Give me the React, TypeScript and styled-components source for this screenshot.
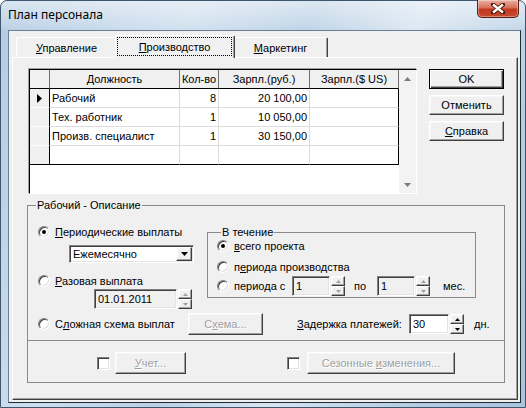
import React from "react"
import styled, { createGlobalStyle, css } from "styled-components"

const GlobalStyle = createGlobalStyle`
  html, body {
    margin: 0;
    padding: 0;
    background: #fff;
  }
  body {
    font-family: "Liberation Sans", Arial, sans-serif;
    font-size: 11px;
    color: #000;
  }
  * {
    box-sizing: border-box;
  }
`

// classic 3d edges
const raised = css`
  border: 1px solid;
  border-color: #fff #404040 #404040 #fff;
  box-shadow: inset -1px -1px #a0a0a0, inset 1px 1px #f7f7f7;
`

const sunken = css`
  border: 1px solid;
  border-color: #808080 #fff #fff #808080;
  box-shadow: inset 1px 1px #404040, inset -1px -1px #e3e3e3;
`

const Window = styled.div`
  width: 526px;
  height: 408px;
  display: flex;
  flex-direction: column;
  border: 1px solid #40566d;
  border-radius: 7px 7px 0 0;
  padding: 0 4px 4px 7px;
  background: linear-gradient(
      180deg,
      rgba(255, 255, 255, 0.5) 0,
      rgba(255, 255, 255, 0.15) 26px,
      rgba(255, 255, 255, 0) 30px
    ),
    linear-gradient(
      112deg,
      #b3cbe2 0%,
      #cddeee 28%,
      #bad0e5 46%,
      #d8e5f1 62%,
      #b6cee4 82%,
      #a9c4de 100%
    );
`

const TitleBar = styled.div`
  height: 29px;
  flex: none;
  display: flex;
  justify-content: space-between;
  align-items: flex-start;
`

const Title = styled.span`
  font-family: "Noto Sans", "Liberation Sans", sans-serif;
  font-size: 12px;
  line-height: 28px;
  color: #000;
`

const CloseButton = styled.div`
  width: 42px;
  height: 18px;
  margin: -1px 2px 0 0;
  border: 1px solid #5c1d12;
  border-top: none;
  border-radius: 0 0 5px 5px;
  background: linear-gradient(180deg, #eab0a1 0%, #d8705a 45%, #c2381f 55%, #c64a30 100%);
  box-shadow: inset 0 0 0 1px rgba(255, 255, 255, 0.35);
  display: flex;
  align-items: center;
  justify-content: center;
`

const Client = styled.div`
  flex: 1;
  display: flex;
  flex-direction: column;
  background: #f0f0f0;
  border: 1px solid;
  border-color: #6b7f95 #1e2a36 #1e2a36 #6b7f95;
  padding: 4px 2px 2px 3px;
`

const TabStrip = styled.div`
  height: 22px;
  flex: none;
  display: flex;
  align-items: flex-end;
  padding-left: 4px;
`

const Tab = styled.div<{ $w: number; $active?: boolean }>`
  position: relative;
  width: ${(p) => p.$w}px;
  height: 20px;
  display: flex;
  align-items: center;
  justify-content: center;
  background: #f0f0f0;
  border-top: 1px solid #fff;
  border-left: 1px solid #fff;
  border-right: 1px solid #404040;
  border-radius: 2px 2px 0 0;
  box-shadow: inset -1px 0 #a0a0a0;
  ${(p) =>
    p.$active &&
    css`
      z-index: 1;
      width: ${p.$w + 4}px;
      height: 23px;
      margin: 0 -2px -1px;
      align-items: stretch;
      padding: 1px 2px 2px 1px;
    `}
`

const FocusLabel = styled.span`
  flex: 1;
  display: flex;
  align-items: center;
  justify-content: center;
  border: 1px dotted #000;
`

const Panel = styled.div`
  flex: 1;
  display: flex;
  flex-direction: column;
  border: 1px solid;
  border-color: #fff #404040 #404040 #fff;
  box-shadow: inset -1px -1px #a0a0a0;
`

const TopRow = styled.div`
  display: flex;
  align-items: flex-start;
  margin-top: 11px;
  padding-left: 16px;
`

const GridFrame = styled.div`
  width: 388px;
  height: 125px;
  display: flex;
  background: #fff;
  border: 1px solid;
  border-color: #000 #fff #fff #000;
  box-shadow: -1px -1px 0 #a0a0a0;
`

const Cells = styled.div`
  width: 369px;
  display: grid;
  grid-template-columns: 20px 130px 39px 91px 89px;
  grid-auto-rows: 19px;
  align-content: start;
`

const HeadCell = styled.div`
  background: #f0f0f0;
  border-right: 1px solid #6d6d6d;
  border-bottom: 1px solid #000;
  display: flex;
  align-items: center;
  justify-content: center;
`

const RowHead = styled.div<{ $last?: boolean }>`
  background: #f0f0f0;
  border-right: 1px solid #000;
  border-bottom: 1px solid ${(p) => (p.$last ? "#000" : "#fdfdfd")};
  display: flex;
  align-items: center;
  justify-content: center;
`

const Cell = styled.div<{ $num?: boolean; $edge?: boolean; $last?: boolean }>`
  border-right: 1px solid ${(p) => (p.$edge ? "#000" : "#dcdcdc")};
  border-bottom: 1px solid ${(p) => (p.$last ? "#000" : "#dcdcdc")};
  display: flex;
  align-items: center;
  justify-content: ${(p) => (p.$num ? "flex-end" : "flex-start")};
  padding: 0 ${(p) => (p.$num ? "2px" : "0")} 0 ${(p) => (p.$num ? "0" : "2px")};
  white-space: nowrap;
`

const ScrollBar = styled.div`
  width: 17px;
  display: flex;
  flex-direction: column;
  justify-content: space-between;
  background: #f3f3f3;
`

const ScrollArrow = styled.div`
  height: 17px;
  display: flex;
  align-items: center;
  justify-content: center;
`

const ButtonColumn = styled.div`
  display: flex;
  flex-direction: column;
  gap: 6px;
  margin-left: 12px;
`

const Button = styled.button<{ $w: number; $h?: number; $default?: boolean }>`
  width: ${(p) => p.$w}px;
  height: ${(p) => p.$h ?? 22}px;
  padding: 0;
  margin: 0;
  font: inherit;
  background: #f0f0f0;
  color: #000;
  display: flex;
  align-items: center;
  justify-content: center;
  ${raised}
  &:disabled {
    color: #a0a0a0;
    text-shadow: 1px 1px #fff;
  }
  ${(p) =>
    p.$default &&
    css`
      border: 1px solid #000;
      box-shadow: inset 1px 1px #fff, inset -1px -1px #404040,
        inset -2px -2px #a0a0a0;
    `}
`

const Group = styled.fieldset<{ $w: number }>`
  width: ${(p) => p.$w}px;
  margin: 0;
  padding: 0;
  min-width: 0;
  border: 1px solid #8a8a8a;
`

const Legend = styled.legend<{ $indent: number }>`
  margin-left: ${(p) => p.$indent}px;
  padding: 0 1px;
  line-height: 13px;
  font-size: 11px;
`

const MainGroup = styled(Group)`
  margin: 5px 0 0 14px;
  padding-bottom: 8px;
`

const Upper = styled.div`
  display: flex;
  align-items: flex-start;
`

const LeftColumn = styled.div`
  width: 179px;
  display: flex;
  flex-direction: column;
  padding-left: 10px;
`

const Option = styled.div<{ $h?: number }>`
  height: ${(p) => p.$h ?? 16}px;
  display: flex;
  align-items: center;
  gap: 5px;
  white-space: nowrap;
`

const RadioDot = styled.span<{ $on?: boolean }>`
  width: 12px;
  height: 12px;
  flex: none;
  border-radius: 50%;
  background: #fff;
  border: 1px solid;
  border-color: #808080 #fff #fff #808080;
  box-shadow: inset 1px 1px #404040, inset -1px -1px #dcdcdc;
  display: flex;
  align-items: center;
  justify-content: center;
  &::after {
    content: "";
    width: 4px;
    height: 4px;
    border-radius: 50%;
    background: ${(p) => (p.$on ? "#000" : "transparent")};
  }
`

const Indented = styled.div<{ $left: number; $top?: number }>`
  display: flex;
  align-items: center;
  margin-left: ${(p) => p.$left}px;
  margin-top: ${(p) => p.$top ?? 0}px;
`

const Edit = styled.div<{ $w: number; $h?: number; $white?: boolean }>`
  width: ${(p) => p.$w}px;
  height: ${(p) => p.$h ?? 20}px;
  flex: none;
  display: flex;
  align-items: center;
  padding: 0 3px;
  background: ${(p) => (p.$white ? "#fff" : "#f0f0f0")};
  ${sunken}
`

const DropButton = styled.div`
  width: 16px;
  height: 14px;
  margin-left: auto;
  margin-right: -2px;
  background: #f0f0f0;
  display: flex;
  align-items: center;
  justify-content: center;
  ${raised}
`

const Spin = styled.div`
  width: 14px;
  height: 20px;
  flex: none;
  display: flex;
  flex-direction: column;
  margin-left: 1px;
`

const SpinHalf = styled.div`
  flex: 1;
  background: #f0f0f0;
  display: flex;
  align-items: center;
  justify-content: center;
  ${raised}
`

const During = styled(Group)`
  margin-top: 14px;
  padding: 0 0 1px 9px;
`

const Fixed = styled.span<{ $w: number; $left?: number }>`
  width: ${(p) => p.$w}px;
  margin-left: ${(p) => p.$left ?? 0}px;
  flex: none;
  white-space: nowrap;
`

const SchemeRow = styled.div`
  height: 22px;
  margin-top: 4px;
  padding-left: 10px;
  display: flex;
  align-items: center;
`

const Divider = styled.div`
  height: 1px;
  margin-top: 5px;
  background: #8a8a8a;
`

const BottomRow = styled.div`
  height: 22px;
  margin-top: 11px;
  display: flex;
  align-items: center;
`

const CheckBox = styled.span<{ $left: number }>`
  width: 13px;
  height: 13px;
  margin-left: ${(p) => p.$left}px;
  flex: none;
  background: #fff;
  ${sunken}
`

const Key = styled.u`
  text-decoration: underline;
  text-underline-offset: 1px;
`

function Tri({ dir, color = "#000", w = 7, h = 4 }: { dir: "up" | "down" | "right"; color?: string; w?: number; h?: number }) {
  const d =
    dir === "up"
      ? `M0 ${h} L${w / 2} 0 L${w} ${h} Z`
      : dir === "down"
        ? `M0 0 L${w} 0 L${w / 2} ${h} Z`
        : `M0 0 L${w} ${h / 2} L0 ${h} Z`
  return (
    <svg width={w} height={h} viewBox={`0 0 ${w} ${h}`} style={{ display: "block" }}>
      <path d={d} fill={color} />
    </svg>
  )
}

function SpinBox({ off }: { off?: boolean }) {
  const c = off ? "#a0a0a0" : "#000"
  return (
    <Spin>
      <SpinHalf>
        <Tri dir="up" color={c} w={5} h={3} />
      </SpinHalf>
      <SpinHalf>
        <Tri dir="down" color={c} w={5} h={3} />
      </SpinHalf>
    </Spin>
  )
}

const rows = [
  { name: "Рабочий", count: "8", rub: "20 100,00" },
  { name: "Тех. работник", count: "1", rub: "10 050,00" },
  { name: "Произв. специалист", count: "1", rub: "30 150,00" },
  { name: "", count: "", rub: "" },
]

export default function App() {
  return (
    <>
      <GlobalStyle />
      <Window>
        <TitleBar>
          <Title>План персонала</Title>
          <CloseButton>
            <svg width="14" height="11" viewBox="0 0 14 11">
              <path
                d="M2 1.5 L12 9.5 M12 1.5 L2 9.5"
                stroke="#4a1208"
                strokeWidth="4.2"
                strokeLinecap="square"
              />
              <path d="M2 1.5 L12 9.5 M12 1.5 L2 9.5" stroke="#fff" strokeWidth="2.4" />
            </svg>
          </CloseButton>
        </TitleBar>
        <Client>
          <TabStrip>
            <Tab $w={101}>
              <span>
                <Key>У</Key>правление
              </span>
            </Tab>
            <Tab $w={116} $active>
              <FocusLabel>
                <span>
                  <Key>П</Key>роизводство
                </span>
              </FocusLabel>
            </Tab>
            <Tab $w={95}>
              <span>
                <Key>М</Key>аркетинг
              </span>
            </Tab>
          </TabStrip>
          <Panel>
            <TopRow>
              <GridFrame>
                <Cells>
                  <HeadCell />
                  <HeadCell>Должность</HeadCell>
                  <HeadCell>Кол-во</HeadCell>
                  <HeadCell>Зарпл.(руб.)</HeadCell>
                  <HeadCell>Зарпл.($ US)</HeadCell>
                  {rows.map((r, i) => {
                    const last = i === rows.length - 1
                    return (
                      <React.Fragment key={i}>
                        <RowHead $last={last}>{i === 0 && <Tri dir="right" w={5} h={9} />}</RowHead>
                        <Cell $last={last}>{r.name}</Cell>
                        <Cell $num $last={last}>
                          {r.count}
                        </Cell>
                        <Cell $num $last={last}>
                          {r.rub}
                        </Cell>
                        <Cell $edge $last={last} />
                      </React.Fragment>
                    )
                  })}
                </Cells>
                <ScrollBar>
                  <ScrollArrow>
                    <Tri dir="up" color="#7a7a7a" w={7} h={4} />
                  </ScrollArrow>
                  <ScrollArrow>
                    <Tri dir="down" color="#7a7a7a" w={7} h={4} />
                  </ScrollArrow>
                </ScrollBar>
              </GridFrame>
              <ButtonColumn>
                <Button $w={75} $h={20} $default>
                  OK
                </Button>
                <Button $w={75} $h={20}>
                  Отменить
                </Button>
                <Button $w={75} $h={20}>
                  <span>
                    <Key>С</Key>правка
                  </span>
                </Button>
              </ButtonColumn>
            </TopRow>

            <MainGroup $w={478}>
              <Legend $indent={8}>Рабочий - Описание</Legend>
              <Upper>
                <LeftColumn>
                  <Option style={{ marginTop: 12 }}>
                    <RadioDot $on />
                    <span>
                      <Key>П</Key>ериодические выплаты
                    </span>
                  </Option>
                  <Indented $left={31} $top={5}>
                    <Edit $w={125} $h={18} $white>
                      Ежемесячно
                      <DropButton>
                        <Tri dir="down" w={7} h={4} />
                      </DropButton>
                    </Edit>
                  </Indented>
                  <Option style={{ marginTop: 10 }}>
                    <RadioDot />
                    <span>
                      <Key>Р</Key>азовая выплата
                    </span>
                  </Option>
                  <Indented $left={56}>
                    <Edit $w={83}>01.01.2011</Edit>
                    <SpinBox off />
                  </Indented>
                </LeftColumn>
                <During $w={269}>
                  <Legend $indent={4}>В течение</Legend>
                  <Option $h={14}>
                    <RadioDot $on />
                    <span>
                      <Key>в</Key>сего проекта
                    </span>
                  </Option>
                  <Option $h={14} style={{ marginTop: 7 }}>
                    <RadioDot />
                    <span>
                      п<Key>е</Key>риода производства
                    </span>
                  </Option>
                  <Option $h={20} style={{ marginTop: 2, gap: 0 }}>
                    <RadioDot />
                    <Fixed $w={58} $left={5}>
                      перио<Key>д</Key>а с
                    </Fixed>
                    <Edit $w={38}>1</Edit>
                    <SpinBox off />
                    <Fixed $w={23} $left={9}>
                      по
                    </Fixed>
                    <Edit $w={38}>1</Edit>
                    <SpinBox off />
                    <Fixed $w={30} $left={13}>
                      мес.
                    </Fixed>
                  </Option>
                </During>
              </Upper>

              <SchemeRow>
                <Option style={{ width: 150 }}>
                  <RadioDot />
                  <span>
                    С<Key>л</Key>ожная схема выплат
                  </span>
                </Option>
                <Button $w={75} disabled>
                  <span>
                    С<Key>х</Key>ема...
                  </span>
                </Button>
                <Fixed $w={112} $left={34}>
                  <Key>З</Key>адержка платежей:
                </Fixed>
                <Edit $w={40} $white>
                  30
                </Edit>
                <SpinBox />
                <Fixed $w={30} $left={10}>
                  дн.
                </Fixed>
              </SchemeRow>

              <Divider />

              <BottomRow>
                <CheckBox $left={69} />
                <Button $w={71} disabled style={{ marginLeft: 5 }}>
                  <span>
                    <Key>У</Key>чет...
                  </span>
                </Button>
                <CheckBox $left={101} />
                <Button $w={148} disabled style={{ marginLeft: 7 }}>
                  <span>
                    Сезонные <Key>и</Key>зменения...
                  </span>
                </Button>
              </BottomRow>
            </MainGroup>
          </Panel>
        </Client>
      </Window>
    </>
  )
}
